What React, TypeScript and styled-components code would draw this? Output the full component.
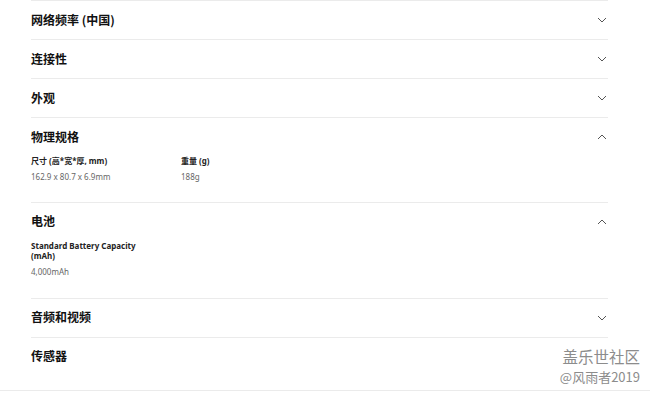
import React from "react";
import styled, { createGlobalStyle } from "styled-components";

const GlobalStyle = createGlobalStyle`
  html, body {
    margin: 0;
    padding: 0;
    background: #ffffff;
  }
  body {
    font-family: "Noto Sans", "Noto Sans CJK SC", sans-serif;
    -webkit-font-smoothing: antialiased;
  }
`;

const Page = styled.div`
  position: relative;
  width: 650px;
  height: 398px;
  overflow: hidden;
  background: #ffffff;
`;

const SpecList = styled.div`
  margin-left: 31px;
  width: 577px;
  display: flex;
  flex-direction: column;
`;

const Section = styled.div`
  border-top: 1px solid #ebebeb;
`;

const Header = styled.div`
  height: 38px;
  display: flex;
  align-items: center;
  justify-content: space-between;
`;

const Title = styled.div`
  font-family: "Noto Sans CJK SC", "Noto Sans", sans-serif;
  font-size: 12px;
  line-height: 14px;
  font-weight: 700;
  color: #111111;
  margin-top: -1px;
`;

const Chevron = styled.svg<{ $open?: boolean }>`
  width: 10px;
  height: 6px;
  margin-right: 1px;
  transform: ${(p) => (p.$open ? "rotate(180deg)" : "none")};
`;

const Body = styled.div<{ $bottom: number }>`
  display: grid;
  grid-template-columns: 150px 150px;
  padding-bottom: ${(p) => p.$bottom}px;
`;

const Item = styled.div`
  display: flex;
  flex-direction: column;
  gap: 4px;
  padding-right: 30px;
`;

const Label = styled.div`
  font-family: "Noto Sans", "Noto Sans CJK SC", sans-serif;
  font-size: 8px;
  line-height: 10.5px;
  font-weight: 700;
  color: #222222;
`;

const Value = styled.div`
  font-family: "Noto Sans", "Noto Sans CJK SC", sans-serif;
  font-size: 8px;
  line-height: 11px;
  color: #666666;
`;

const Footer = styled.div`
  position: absolute;
  left: 0;
  right: 0;
  top: 390px;
  border-top: 1px solid #ebebeb;
`;

const Watermark = styled.div`
  position: absolute;
  right: 10px;
  top: 349px;
  display: flex;
  flex-direction: column;
  align-items: flex-end;
  gap: 5px;
  font-family: "Noto Sans CJK SC", sans-serif;
  color: #8c8c8c;
`;

const MarkName = styled.div`
  font-size: 15.5px;
  line-height: 1;
`;

const MarkUser = styled.div`
  font-size: 13px;
  line-height: 1;
`;

type Spec = { label: string; value: string };
type SectionData = { title: string; open?: boolean; bottom?: number; specs?: Spec[] };

const sections: SectionData[] = [
  { title: "网络频率 (中国)" },
  { title: "连接性" },
  { title: "外观" },
  {
    title: "物理规格",
    open: true,
    bottom: 20,
    specs: [
      { label: "尺寸 (高*宽*厚, mm)", value: "162.9 x 80.7 x 6.9mm" },
      { label: "重量 (g)", value: "188g" },
    ],
  },
  {
    title: "电池",
    open: true,
    bottom: 21,
    specs: [{ label: "Standard Battery Capacity (mAh)", value: "4,000mAh" }],
  },
  { title: "音频和视频" },
  { title: "传感器" },
];

function ChevronIcon({ open }: { open?: boolean }) {
  return (
    <Chevron $open={open} viewBox="0 0 10 6">
      <path d="M1 1 L5 5 L9 1" fill="none" stroke="#555555" strokeWidth="1" />
    </Chevron>
  );
}

export default function App() {
  return (
    <Page>
      <GlobalStyle />
      <SpecList>
        {sections.map((s) => (
          <Section key={s.title}>
            <Header>
              <Title>{s.title}</Title>
              {s.title !== "传感器" && <ChevronIcon open={s.open} />}
            </Header>
            {s.specs && (
              <Body $bottom={s.bottom ?? 20}>
                {s.specs.map((sp) => (
                  <Item key={sp.label}>
                    <Label>{sp.label}</Label>
                    <Value>{sp.value}</Value>
                  </Item>
                ))}
              </Body>
            )}
          </Section>
        ))}
      </SpecList>
      <Footer />
      <Watermark>
        <MarkName>盖乐世社区</MarkName>
        <MarkUser>@风雨者2019</MarkUser>
      </Watermark>
    </Page>
  );
}
